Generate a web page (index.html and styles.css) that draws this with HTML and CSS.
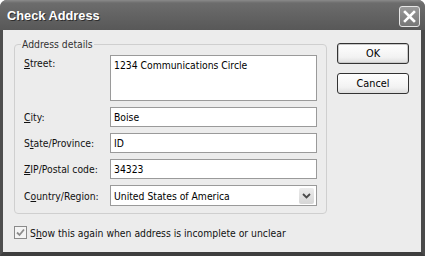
FILE: index.html
```html
<!DOCTYPE html>
<html lang="en">
<head>
  <meta charset="UTF-8" />
  <title>Check Address</title>
  <link rel="stylesheet" href="styles.css">
</head>
<body>

  <div class="window">
    <div class="titlebar">
      <span class="title">Check Address</span>
      <button class="close" aria-label="Close">
        <svg width="13" height="13" viewBox="0 0 13 13">
          <path d="M2 2 L11 11 M11 2 L2 11" stroke="#fff" stroke-width="2.6" stroke-linecap="square" />
        </svg>
      </button>
    </div>

    <div class="frame">
      <div class="main">
        <div class="left">
          <fieldset class="group">
            <legend>Address details</legend>
            <div class="form">
              <label class="lbl top"><span><u>S</u>treet:</span></label>
              <div class="field area">1234 Communications Circle</div>

              <label class="lbl"><span><u>C</u>ity:</span></label>
              <div class="field">Boise</div>

              <label class="lbl"><span>S<u>t</u>ate/Province:</span></label>
              <div class="field">ID</div>

              <label class="lbl"><span><u>Z</u>IP/Postal code:</span></label>
              <div class="field">34323</div>

              <label class="lbl"><span>C<u>o</u>untry/Region:</span></label>
              <div class="field select">
                <span>United States of America</span>
                <span class="drop">
                  <svg width="9" height="6" viewBox="0 0 9 6">
                    <path d="M1 1 L4.5 4.5 L8 1" fill="none" stroke="#4a4a4a" stroke-width="1.8" />
                  </svg>
                </span>
              </div>
            </div>
          </fieldset>

          <label class="check">
            <span class="box">
              <svg width="9" height="9" viewBox="0 0 9 9">
                <path d="M1 4.5 L3.5 7 L8 1.5" fill="none" stroke="#8c8c8c" stroke-width="1.8" />
              </svg>
            </span>
            <span>S<u>h</u>ow this again when address is incomplete or unclear</span>
          </label>
        </div>

        <div class="buttons">
          <button class="btn default">OK</button>
          <button class="btn">Cancel</button>
        </div>
      </div>
    </div>
  </div>

</body>
</html>
```

FILE: styles.css
```css
* { box-sizing: border-box; }

html {
  background-color: #ffffff;
}

body {
  margin: 0;
  font-family: "DejaVu Sans Condensed", "Liberation Sans", Arial, sans-serif;
  font-size: 10.3px;
  color: #000;
}

.window {
  width: 425px;
  height: 256px;
  display: flex;
  flex-direction: column;
  background-color: #505050;
  border-radius: 7px 7px 0 0;
  overflow: hidden;
}

/* Title bar */
.titlebar {
  height: 30px;
  display: flex;
  align-items: center;
  justify-content: space-between;
  padding: 0 5px 0 7px;
  background: linear-gradient(#8a8a8a 0, #6c6c6c 3px, #636363 50%, #585858 100%);
}

.title {
  color: #ffffff;
  font-family: "Liberation Sans", Arial, sans-serif;
  font-weight: bold;
  font-size: 12.8px;
  text-shadow: 1px 1px 0 #2e2e2e;
}

.close {
  width: 21px;
  height: 21px;
  padding: 0;
  margin-top: 2px;
  display: flex;
  align-items: center;
  justify-content: center;
  border: 1px solid #e6e6e6;
  border-radius: 3px;
  background: linear-gradient(#9a9a9a, #777777);
}

/* Window body */
.frame {
  flex: 1;
  background-color: #ececec;
  border-left: 3px solid #4e4e4e;
  border-right: 4px solid #4a4a4a;
  border-bottom: 4px solid #3e3e3e;
}

.main {
  display: flex;
  padding-left: 11px;
}

.left {
  width: 313px;
}

.group {
  margin: 7px 0 0;
  padding: 4px 9px 7px;
  border: 1px solid #cfcfcf;
  border-radius: 4px;
}

.group legend {
  margin-left: -3px;
  padding: 0 1px;
  line-height: 14px;
  color: #333333;
}

.form {
  display: grid;
  grid-template-columns: 86px 207px;
  row-gap: 6px;
}

.lbl {
  display: flex;
  align-items: center;
  color: #111;
}

.lbl.top {
  align-items: flex-start;
  padding-top: 2px;
}

.field {
  height: 20px;
  display: flex;
  align-items: center;
  padding: 0 3px;
  background-color: #ffffff;
  border: 1px solid #9a9a9a;
}

.field.area {
  height: 46px;
  align-items: flex-start;
  padding-top: 3px;
}

.field.select {
  height: 21px;
  justify-content: space-between;
  padding-right: 2px;
}

.drop {
  width: 15px;
  height: 16px;
  display: flex;
  align-items: center;
  justify-content: center;
  background: linear-gradient(#ececec, #d6d6d6);
  border-radius: 2px;
}

/* Checkbox */
.check {
  display: flex;
  align-items: center;
  gap: 3px;
  margin-top: 12px;
  color: #111;
}

.box {
  width: 13px;
  height: 13px;
  display: flex;
  align-items: center;
  justify-content: center;
  background: #f4f4f4;
  border: 1px solid #8a8a8a;
}

/* Buttons */
.buttons {
  display: flex;
  flex-direction: column;
  gap: 9px;
  margin-left: 10px;
  margin-top: 13px;
}

.btn {
  width: 72px;
  height: 21px;
  padding: 0;
  font-family: inherit;
  font-size: 10.8px;
  color: #000;
  border: 1px solid #333333;
  border-radius: 3px;
  background: linear-gradient(#ffffff, #f2f2f2 70%, #dedede);
}

.btn.default {
  box-shadow: inset 0 0 0 1px #c9c9c9;
}
```
